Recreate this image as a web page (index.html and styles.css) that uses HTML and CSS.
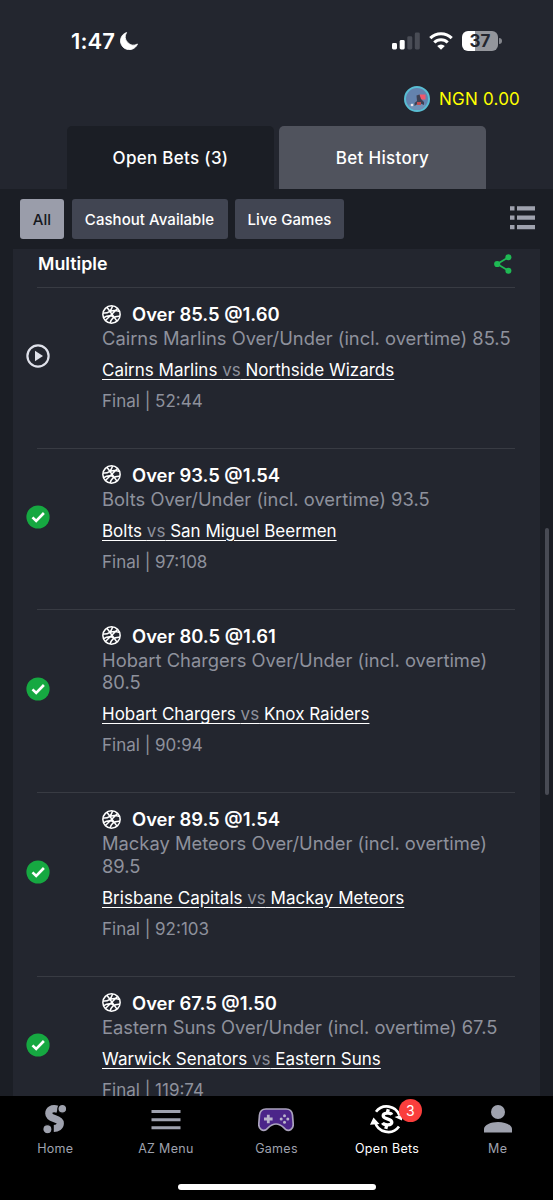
FILE: index.html
```html
<!DOCTYPE html>
<html lang="en">
<head>
    <meta charset="UTF-8">
    <meta name="viewport" content="width=device-width, initial-scale=1.0">
    <title>Open Bets</title>
    <link rel="stylesheet" href="styles.css">
</head>
<body>
    <svg class="sprite" width="0" height="0">
        <symbol id="ball" viewBox="0 0 20 20">
            <g fill="none" stroke="#fff" stroke-width="1.6">
                <circle cx="10" cy="10" r="9.1"/>
                <path d="M3.600 16.400L16.400 3.600M5.200 2.300L15.800 17M1 8.300Q8.500 9.500 11.200 1M7 7.600Q12 4.500 18.600 7M1.400 13.500Q7.500 9.500 12.500 12.500M8.500 19Q10.500 11 19 11.800"/>
            </g>
        </symbol>
        <symbol id="check" viewBox="0 0 24 24">
            <circle cx="12" cy="12" r="11.6" fill="#16a841"/>
            <path d="M6.5 12.3l3.7 3.7L17.9 8" fill="none" stroke="#fff" stroke-width="2.6"/>
        </symbol>
        <symbol id="play" viewBox="0 0 24 24">
            <circle cx="12" cy="12" r="10.6" fill="none" stroke="#dfe1ea" stroke-width="2.2"/>
            <path d="M9 6.8v10.4l8-5.2z" fill="#dfe1ea"/>
        </symbol>
    </svg>

    <header class="header">
        <div class="status-bar">
            <div class="clock">
                <span>1:47</span>
                <svg width="18" height="18" viewBox="0 0 18 18"><path d="M6.600.5A8.800 8.800 0 1 0 17.500 12 8.200 8.200 0 0 1 6.600.5z" fill="#fff" stroke="#fff" stroke-width=".8"/></svg>
            </div>
            <div class="signals">
                <svg width="28" height="18" viewBox="0 0 28 18">
                    <rect x="0" y="11" width="5" height="6.5" rx="1.4" fill="#fff"/>
                    <rect x="7.7" y="8" width="5" height="9.5" rx="1.4" fill="#fff"/>
                    <rect x="15.3" y="4.3" width="5" height="13.2" rx="1.4" fill="#494c55"/>
                    <rect x="22.8" y=".5" width="5" height="17" rx="1.4" fill="#494c55"/>
                </svg>
                <svg width="24" height="18" viewBox="0 0 24 18">
                    <g fill="none" stroke="#fff" stroke-width="3.1">
                        <path d="M1.3 6.100a15.300 15.300 0 0 1 21.400 0"/>
                        <path d="M5.300 10.500a9.600 9.600 0 0 1 13.400 0"/>
                    </g>
                    <path d="M12 17.8l-3.8-3.9a5.5 5.5 0 0 1 7.6 0z" fill="#fff"/>
                </svg>
                <div class="battery"><span>37</span></div>
                <svg class="battery-tip" width="3" height="6" viewBox="0 0 3 6"><path d="M0 0a3 3 0 0 1 0 6z" fill="#84868d"/></svg>
            </div>
        </div>
        <div class="balance">
            <svg width="26" height="26" viewBox="0 0 26 26">
                <circle cx="13" cy="13" r="12" fill="#6482ae" stroke="#59bdd3" stroke-width="2"/>
                <path d="M4 19q9-5 18 0-3 5-9 5t-9-5z" fill="#7092b8"/>
                <path d="M15.5 8.5h6v5h-6z" fill="#f0586c"/>
                <path d="M12.5 9.5l3-1 1.5 4.5 3 3v3l-3.5-1.5-3 .5-3 2v-3l2.5-2z" fill="#3d4154"/>
                <path d="M13 16h4v3h-4z" fill="#bf4c50"/>
                <circle cx="8" cy="19" r="1.3" fill="#eee6ea"/>
            </svg>
            <span>NGN 0.00</span>
        </div>
        <nav class="tabs">
            <a class="tab active">Open Bets (3)</a>
            <a class="tab">Bet History</a>
        </nav>
    </header>

    <div class="filters">
        <button class="filter selected">All</button>
        <button class="filter cashout">Cashout Available</button>
        <button class="filter live">Live Games</button>
        <svg class="list-icon" width="25" height="24" viewBox="0 0 25 24" fill="#9fa2ae">
            <path d="M0 .3h4.500v4.200H0zM7 .3h18v4.200H7zM0 9.600h4.500v4.200H0zM7 9.600h18v4.200H7zM0 19h4.500v4.200H0zM7 19h18v4.200H7z"/>
        </svg>
    </div>

    <main class="bets">
        <section class="card">
            <div class="card-head">
                <h2>Multiple</h2>
                <svg width="18" height="20" viewBox="0 0 18 20">
                    <path d="M14.5 3.2L3.2 10l11.3 6.7" fill="none" stroke="#1fb954" stroke-width="1.8"/>
                    <g fill="#1fb954"><circle cx="14.4" cy="3.2" r="3"/><circle cx="3.2" cy="10" r="3.1"/><circle cx="14.4" cy="16.7" r="3"/></g>
                </svg>
            </div>

            <article class="bet">
                <svg class="state"><use href="#play"/></svg>
                <div class="info">
                    <h3><svg class="ball"><use href="#ball"/></svg><span>Over 85.5 @1.60</span></h3>
                    <p class="market">Cairns Marlins Over/Under (incl. overtime) 85.5</p>
                    <a class="match">Cairns Marlins <span>vs</span> Northside Wizards</a>
                    <p class="score">Final | 52:44</p>
                </div>
            </article>
            <article class="bet">
                <svg class="state"><use href="#check"/></svg>
                <div class="info">
                    <h3><svg class="ball"><use href="#ball"/></svg><span>Over 93.5 @1.54</span></h3>
                    <p class="market">Bolts Over/Under (incl. overtime) 93.5</p>
                    <a class="match">Bolts <span>vs</span> San Miguel Beermen</a>
                    <p class="score">Final | 97:108</p>
                </div>
            </article>
            <article class="bet">
                <svg class="state"><use href="#check"/></svg>
                <div class="info">
                    <h3><svg class="ball"><use href="#ball"/></svg><span>Over 80.5 @1.61</span></h3>
                    <p class="market">Hobart Chargers Over/Under (incl. overtime) 80.5</p>
                    <a class="match">Hobart Chargers <span>vs</span> Knox Raiders</a>
                    <p class="score">Final | 90:94</p>
                </div>
            </article>
            <article class="bet">
                <svg class="state"><use href="#check"/></svg>
                <div class="info">
                    <h3><svg class="ball"><use href="#ball"/></svg><span>Over 89.5 @1.54</span></h3>
                    <p class="market">Mackay Meteors Over/Under (incl. overtime) 89.5</p>
                    <a class="match">Brisbane Capitals <span>vs</span> Mackay Meteors</a>
                    <p class="score">Final | 92:103</p>
                </div>
            </article>
            <article class="bet">
                <svg class="state"><use href="#check"/></svg>
                <div class="info">
                    <h3><svg class="ball"><use href="#ball"/></svg><span>Over 67.5 @1.50</span></h3>
                    <p class="market">Eastern Suns Over/Under (incl. overtime) 67.5</p>
                    <a class="match">Warwick Senators <span>vs</span> Eastern Suns</a>
                    <p class="score">Final | 119:74</p>
                </div>
            </article>
        </section>
        <div class="scrollbar"></div>
    </main>

    <footer class="bottom">
        <nav class="bottom-nav">
            <a class="nav-item">
                <svg width="24" height="30" viewBox="0 0 24 30">
                    <path d="M14.500 5.200C8.500 3.500 5.800 6.500 5.800 9.500c0 6.500 11.500 4 11.500 9.700 0 3.300-3 5.300-6.500 5.300" fill="none" stroke="#9fa2ae" stroke-width="7.200"/>
                    <circle cx="19.300" cy="4.800" r="4.400" fill="#9fa2ae" stroke="#000" stroke-width="1.200"/>
                    <circle cx="4.400" cy="25.200" r="4.600" fill="#9fa2ae" stroke="#000" stroke-width="1.200"/>
                </svg>
                <span>Home</span>
            </a>
            <a class="nav-item">
                <svg width="30" height="30" viewBox="0 0 30 30"><path d="M.5 7.500h29M.5 15.700h29M.5 23.700h29" stroke="#9fa2ae" stroke-width="3"/></svg>
                <span>AZ Menu</span>
            </a>
            <a class="nav-item">
                <svg width="36" height="30" viewBox="0 0 36 30">
                    <path d="M8 5h20c4 0 6 2 6.500 6l.7 9c.3 5-4 8-7.500 5.500-2.500-2-4.500-5.500-9.700-5.500s-7.200 3.500-9.700 5.500C4.800 28 .5 25 .8 20l.7-9C2 7 4 5 8 5z" fill="#4b2589" stroke="#aaa3bd" stroke-width="1.700"/>
                    <path d="M10.300 10.700v8.600M6 15h8.600" stroke="#b9b4cb" stroke-width="2.800"/>
                    <g fill="#b9b4cb"><circle cx="26.500" cy="11.700" r="1.500"/><circle cx="26.500" cy="18.300" r="1.500"/><circle cx="23.200" cy="15" r="1.500"/><circle cx="29.800" cy="15" r="1.500"/></g>
                </svg>
                <span>Games</span>
            </a>
            <a class="nav-item current">
                <span class="badge">3</span>
                <svg width="34" height="30" viewBox="0 0 34 30">
                    <g fill="none" stroke="#fff" stroke-width="2.700">
                        <path d="M6 7.700A13.500 13.500 0 0 1 29.500 11.500M29 22.500A13.500 13.500 0 0 1 5 17.500"/>
                        <path d="M21.800 10.700c-1.200-2.200-8.600-2.300-8.600 1 0 3.900 8.600 2.300 8.600 6.500 0 3.500-7.800 3.200-9.300.7M18.300 5.300l-1.100 4M16.800 20.600l-1 4.300" stroke-width="3.300"/>
                    </g>
                    <path d="M3.500 13.500l6 6.500-9.500.8zM24.500 13l8-2.500-.5 6z" fill="#fff"/>
                </svg>
                <span>Open Bets</span>
            </a>
            <a class="nav-item">
                <svg width="28" height="30" viewBox="0 0 28 30"><circle cx="14" cy="8" r="7" fill="#9fa2ae"/><path d="M0 28.500V25C0 20.800 7 18 14 18s14 2.800 14 7v3.500z" fill="#9fa2ae"/></svg>
                <span>Me</span>
            </a>
        </nav>
        <div class="home-bar"></div>
    </footer>
</body>
</html>
```
FILE: styles.css
```css
* {
    box-sizing: border-box;
}
body {
    margin: 0;
    height: 1200px;
    display: flex;
    flex-direction: column;
    overflow: hidden;
    background-color: #1b1e25;
    color: #fff;
    font-family: Inter, sans-serif;
}
h2, h3, p {
    margin: 0;
}
svg {
    display: block;
    flex: none;
}
.sprite {
    position: absolute;
}

/* header */
.header {
    flex: none;
    height: 189px;
    background-color: #23262f;
    display: flex;
    flex-direction: column;
}
.status-bar {
    height: 82px;
    padding: 0 51px 0 71px;
    display: flex;
    justify-content: space-between;
    align-items: center;
}
.clock {
    display: flex;
    align-items: center;
    gap: 5px;
    font-size: 22px;
    font-weight: 600;
    letter-spacing: 0.1px;
}
.signals {
    display: flex;
    align-items: center;
    gap: 9px;
}
.battery {
    width: 36px;
    height: 20px;
    border-radius: 6px;
    background: linear-gradient(to right, #fff 13px, #94969c 13px);
    color: #23262f;
    font-size: 17px;
    font-weight: 700;
    line-height: 20px;
    text-align: center;
}
.battery-tip {
    margin-left: -8px;
}
.balance {
    height: 44px;
    padding: 0 33px 10px 0;
    display: flex;
    justify-content: flex-end;
    align-items: center;
    gap: 9px;
    color: #ffff00;
    font-size: 17px;
    letter-spacing: 0.2px;
}
.tabs {
    display: flex;
    gap: 5px;
    padding-left: 67px;
}
.tab {
    width: 207px;
    height: 63px;
    border-radius: 5px 5px 0 0;
    background-color: #50535d;
    font-size: 17px;
    font-weight: 450;
    letter-spacing: 0.3px;
    line-height: 64px;
    text-align: center;
}
.tab.active {
    background-color: #1b1e25;
}

/* filters */
.filters {
    flex: none;
    height: 60px;
    padding: 0 18px 0 20px;
    display: flex;
    align-items: center;
    gap: 7.5px;
}
.filter {
    width: 44px;
    height: 40px;
    padding: 0;
    border: none;
    border-radius: 3px;
    background-color: #414552;
    color: #fff;
    font-family: inherit;
    font-size: 15px;
    font-weight: 450;
    letter-spacing: 0.05px;
}
.filter.selected {
    background-color: #9a9daa;
    color: #15171c;
}
.cashout {
    width: 156px;
}
.live {
    width: 109px;
}
.list-icon {
    margin: -2px 0 0 auto;
}

/* bet list */
.bets {
    flex: 1;
    min-height: 0;
    overflow: hidden;
    display: flex;
    padding-left: 13px;
}
.card {
    flex: none;
    width: 527px;
    height: 900px;
    padding: 0 25px;
    background-color: #23262f;
}
.card-head {
    height: 38px;
    padding: 0 3px 8px 0;
    display: flex;
    justify-content: space-between;
    align-items: center;
}
.card-head h2 {
    font-size: 17.8px;
    font-weight: 600;
    line-height: 20px;
}
.bet {
    width: 478px;
    margin-left: -1px;
    border-top: 1px solid #383b43;
    padding: 15px 0 36px 0;
    display: flex;
    align-items: center;
}
.state {
    width: 24px;
    height: 24px;
    margin: -3px 0 0 -11px;
}
.info {
    flex: 1;
    margin-left: 52px;
    margin-right: -2px;
    font-size: 17px;
    line-height: 22px;
    color: #8e919c;
}
.info h3 {
    display: flex;
    align-items: center;
    gap: 11px;
    color: #fff;
    font-size: 18.4px;
    font-weight: 600;
}
.ball {
    width: 19px;
    height: 19px;
}
.market {
    margin-top: 2px;
    font-size: 18.35px;
    line-height: 22.8px;
}
.match {
    display: block;
    margin-top: 9px;
    color: #fff;
    text-decoration: underline;
    text-underline-offset: 3px;
}
.match span {
    color: #8e919c;
}
.score {
    margin-top: 9px;
}
.scrollbar {
    width: 4px;
    height: 267px;
    margin: 279px 0 0 5px;
    border-radius: 2px;
    background-color: #484b54;
}

/* bottom navigation */
.bottom {
    flex: none;
    height: 104px;
    background-color: #000;
}
.bottom-nav {
    height: 88px;
    display: grid;
    grid-template-columns: repeat(5, 1fr);
}
.nav-item {
    position: relative;
    display: flex;
    flex-direction: column;
    align-items: center;
    padding-top: 8px;
    color: #9fa2ae;
    font-size: 12.5px;
    letter-spacing: 0.3px;
}
.nav-item > span:last-child {
    margin-top: 7px;
}
.current {
    color: #fff;
}
.badge {
    position: absolute;
    top: 3px;
    left: 67px;
    width: 23px;
    height: 23px;
    border-radius: 50%;
    background-color: #fa3e3c;
    font-size: 14px;
    line-height: 23px;
    text-align: center;
    letter-spacing: 0;
}
.home-bar {
    width: 198px;
    height: 6px;
    margin: 0 auto;
    border-radius: 3px;
    background-color: #fff;
}
```
